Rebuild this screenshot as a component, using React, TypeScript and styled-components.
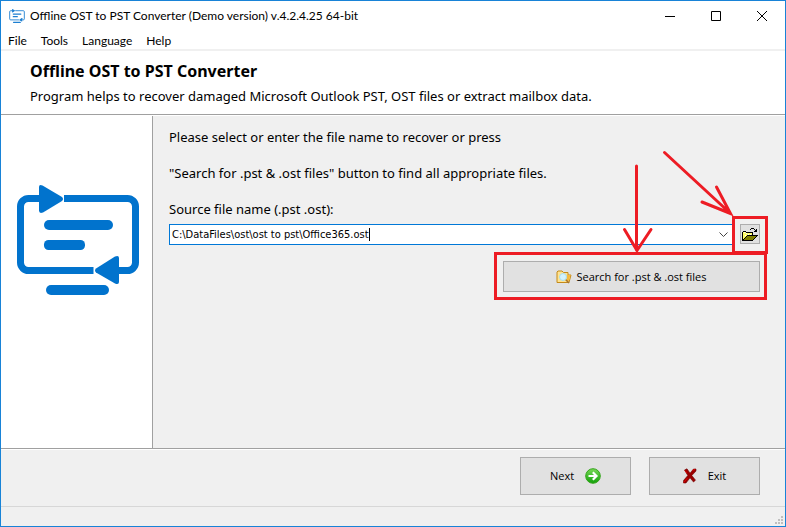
import React, { useState } from "react";
import styled, { createGlobalStyle } from "styled-components";

const chrome = `Lato, "Open Sans", sans-serif`;
const reading = `"Noto Sans", "Open Sans", sans-serif`;
const controls = `"Open Sans", "Noto Sans", sans-serif`;
const red = "#ed1c24";

const GlobalStyle = createGlobalStyle`
  * { box-sizing: border-box; }
  body { margin: 0; background: #f0f0f0; color: #000; font: 12px/16px ${chrome}; }
  button, input { font: inherit; color: inherit; }
  h1, p { margin: 0; }
`;

const Window = styled.div`
  display: flex;
  flex-direction: column;
  min-height: 100vh;
  border: 1px solid #1883d7;
  background: #f0f0f0;
`;

const TitleBar = styled.header`
  display: flex;
  align-items: center;
  gap: 5px;
  height: 30px;
  padding-left: 8px;
  background: #fff;
`;

const Title = styled.span`
  flex: 1;
  white-space: nowrap;
`;

const Controls = styled.div`
  display: flex;
`;

const WindowButton = styled.button`
  display: grid;
  place-items: center;
  width: 46px;
  height: 30px;
  padding: 0;
  border: 0;
  background: none;
`;

const MenuBar = styled.nav`
  display: flex;
  height: 20px;
  background: #fff;
  border-bottom: 2px solid #f0f0f0;
`;

const MenuItem = styled.button`
  padding: 0 7px;
  border: 0;
  background: none;
  line-height: 20px;
`;

const Banner = styled.section`
  height: 64px;
  padding: 9px 29px 0;
  margin-bottom: 1px;
  background: #fff;
  border-bottom: 1px solid #a0a0a0;
  box-shadow: 0 1px #fff;
  font-family: ${reading};
`;

const Heading = styled.h1`
  font-size: 16px;
  line-height: 22px;
  font-weight: 700;
`;

const Description = styled.p`
  font-size: 13px;
  line-height: 28px;
`;

const Body = styled.main`
  display: flex;
  flex: 1;
`;

const Sidebar = styled.aside`
  flex: none;
  width: 152px;
  padding: 69px 0 0 16px;
  background: #fff;
  border-right: 1px solid #a0a0a0;
`;

const Content = styled.section`
  position: relative;
  flex: 1;
  display: flex;
  flex-direction: column;
  padding: 11px 25px 0 16px;
`;

const Line = styled.p`
  margin-bottom: 16px;
  font: 13px/20px ${reading};
`;

const FieldLabel = styled.label`
  margin-bottom: 5px;
  font: 13px/20px ${reading};
`;

const FieldRow = styled.div`
  display: flex;
  gap: 6px;
`;

const Combo = styled.div`
  display: flex;
  flex: 1;
  align-items: center;
  height: 21px;
  padding-left: 2px;
  background: #fff;
  border: 1px solid #0078d7;
`;

const PathInput = styled.input`
  field-sizing: content;
  padding: 0;
  border: 0;
  outline: 0;
  background: none;
  font: 11px/16px "DejaVu Sans Condensed", "DejaVu Sans", sans-serif;
`;

const Caret = styled.span`
  width: 1px;
  height: 13px;
  background: #000;
`;

const DropButton = styled.button`
  display: grid;
  place-items: center;
  width: 19px;
  height: 19px;
  margin-left: auto;
  padding: 0;
  border: 0;
  background: none;
`;

const Marked = styled.div<{ $inset: string }>`
  position: relative;
  display: flex;

  &::after {
    content: "";
    position: absolute;
    inset: ${(p) => p.$inset};
    border: 3px solid ${red};
    pointer-events: none;
  }
`;

const PushButton = styled.button<{ $width: number; $height: number; $gap?: number }>`
  display: flex;
  align-items: center;
  justify-content: center;
  gap: ${(p) => p.$gap ?? 0}px;
  width: ${(p) => p.$width}px;
  height: ${(p) => p.$height}px;
  padding: 0;
  background: #e1e1e1;
  border: 1px solid #adadad;
  font: 11px/16px ${controls};
`;

const SearchRow = styled.div`
  display: flex;
  justify-content: flex-end;
  margin-top: 16px;
`;

const Arrows = styled.svg`
  position: absolute;
  top: 4px;
  right: 0;
  pointer-events: none;
`;

const Footer = styled.footer`
  display: flex;
  justify-content: flex-end;
  gap: 18px;
  height: 58px;
  padding: 8px 25px 0;
  border-top: 1px solid #a0a0a0;
  box-shadow: inset 0 1px #fff;
`;

const StatusBar = styled.div`
  display: flex;
  align-items: flex-end;
  justify-content: flex-end;
  height: 20px;
  padding: 0 2px 2px 0;
  border-top: 1px solid #d7d7d7;
`;

const Logo = ({ width, height, color }: { width: number; height: number; color: string }) => (
  <svg width={width} height={height} viewBox="0 0 122 110" fill={color} aria-hidden="true">
    <g fill="none" stroke={color} strokeWidth="7">
      <path d="M47 13.5h63.500a8 8 0 0 1 8 8V77.500a8 8 0 0 1-8 8H100" />
      <path d="M76.500 85.500H11.500a8 8 0 0 1-8-8V21.500a8 8 0 0 1 8-8H24" />
    </g>
    <path d="M22 2q0-3 3.500-1.500L45 12q2 2 0 4L26 27.500q-4 1.500-4-2z" />
    <path d="M102 73q0-3-4-1.500L79 83.500q-2 2 0 4L98 98.500q4 1.500 4-1.500z" />
    <rect x="27" y="35" width="69" height="10" rx="5" />
    <rect x="27" y="55" width="41" height="10" rx="4.500" />
    <rect x="29" y="100" width="63" height="10" rx="5" />
  </svg>
);

const OpenIcon = () => (
  <svg width="16" height="13" viewBox="0 0 16 13" shapeRendering="crispEdges" aria-hidden="true">
    <path d="M1 4h4v1h6v3H5L1 13z" fill="#ffff66" />
    <path d="M2 4h1v1H2zM4 5h1v1H4zM6 6h1v1H6zM8 6h1v1H8zM3 7h1v1H3zM5 7h1v1H5z" fill="#fff" />
    <path d="M5 8h10v1h-1v1h-1v1h-1v1h-1v1H1v-1h1v-1h1v-1h1V9h1z" fill="#808000" />
    <path d="M1 3h3v1H1zM0 4h1v9H0zM4 4h7v1H4zM10 5h1v2h-1zM5 7h11v1H5zM4 8h1v1H4zM3 9h1v1H3zM2 10h1v1H2zM1 11h1v1H1zM14 8h1v1h-1zM13 9h1v1h-1zM12 10h1v1h-1zM11 11h1v1h-1zM1 12h10v1H1zM9 0h3v1H9zM8 1h1v1H8zM12 1h1v1h-1zM13 2h2v1h-2zM12 3h3v1h-3zM14 1h1v2h-1z" fill="#000" />
  </svg>
);

const SearchFolderIcon = () => (
  <svg width="16" height="14" viewBox="0 0 16 14" aria-hidden="true">
    <path d="M1 12.500V2L2 1h4l1.500 1.500H12V5h3l-2 7.500z" fill="#ffe391" stroke="#c48a19" />
    <path d="M10.500 5h4L12.500 12l-2-1.500z" fill="#f5b93c" />
    <circle cx="7" cy="7" r="3.500" fill="#d3f2fc" stroke="#a9dcea" />
    <path d="M9.800 9.800l3.200 3.200" stroke="#a67533" strokeWidth="1.600" />
  </svg>
);

const NextIcon = () => (
  <svg width="16" height="16" viewBox="0 0 16 16" aria-hidden="true">
    <defs>
      <linearGradient id="green" x2="0" y2="1">
        <stop stopColor="#79d957" />
        <stop offset="1" stopColor="#11a009" />
      </linearGradient>
    </defs>
    <circle cx="8" cy="8" r="7.300" fill="url(#green)" stroke="#35a51c" />
    <path d="M3.500 8h7.500M7.800 4.300L11.500 8l-3.700 3.700" fill="none" stroke="#fff" strokeWidth="2.200" />
  </svg>
);

const ExitIcon = () => (
  <svg width="14" height="16" viewBox="0 0 14 16" aria-hidden="true">
    <path d="M1.500 2L4 .8l3 4.400L10.500 1H13v2L8.800 7.500l3.700 4.700L10.500 14 7 9.800 3 15H.5v-2.500L4.800 7.500z" fill="#900" stroke="#700000" strokeWidth=".6" />
    <path d="M.8 14.500L4.500 10M9.500 2.500l2.700-1.200M2 2.500l2 2.700" stroke="#e00000" />
  </svg>
);

export default function App() {
  const [path, setPath] = useState("C:\\DataFiles\\ost\\ost to pst\\Office365.ost");

  return (
    <>
      <GlobalStyle />
      <Window>
        <TitleBar>
          <Logo width={16} height={14} color="#1d7fd1" />
          <Title>Offline OST to PST Converter (Demo version) v.4.2.4.25 64-bit</Title>
          <Controls>
            <WindowButton aria-label="Minimize">
              <svg width="10" height="10"><path d="M0 5.500h10" stroke="#000" /></svg>
            </WindowButton>
            <WindowButton aria-label="Maximize">
              <svg width="10" height="10"><path d="M.5.5h9v9h-9z" fill="none" stroke="#000" /></svg>
            </WindowButton>
            <WindowButton aria-label="Close">
              <svg width="10" height="10"><path d="M0 0l10 10M10 0L0 10" stroke="#000" /></svg>
            </WindowButton>
          </Controls>
        </TitleBar>
        <MenuBar>
          {["File", "Tools", "Language", "Help"].map((item) => (
            <MenuItem key={item}>{item}</MenuItem>
          ))}
        </MenuBar>
        <Banner>
          <Heading>Offline OST to PST Converter</Heading>
          <Description>
            Program helps to recover damaged Microsoft Outlook PST, OST files or extract mailbox data.
          </Description>
        </Banner>
        <Body>
          <Sidebar>
            <Logo width={122} height={110} color="#0173cd" />
          </Sidebar>
          <Content>
            <Line>Please select or enter the file name to recover or press</Line>
            <Line>"Search for .pst &amp; .ost files" button to find all appropriate files.</Line>
            <FieldLabel htmlFor="source">Source file name (.pst .ost):</FieldLabel>
            <FieldRow>
              <Combo>
                <PathInput id="source" value={path} onChange={(e) => setPath(e.target.value)} />
                <Caret />
                <DropButton aria-label="Show recent files">
                  <svg width="9" height="6"><path d="M.5.5l4 4 4-4" fill="none" stroke="#444" /></svg>
                </DropButton>
              </Combo>
              <Marked $inset="-8px -8px -9px -8px">
                <PushButton $width={20} $height={20} aria-label="Open file">
                  <OpenIcon />
                </PushButton>
              </Marked>
            </FieldRow>
            <SearchRow>
              <Marked $inset="-9px -7px -8px -9px">
                <PushButton $width={257} $height={31} $gap={4}>
                  <SearchFolderIcon />
                  Search for .pst &amp; .ost files
                </PushButton>
              </Marked>
            </SearchRow>
            <Arrows width="185" height="140" viewBox="600 120 185 140" aria-hidden="true">
              <g fill="none" stroke={red} strokeWidth="3" strokeLinecap="round">
                <path d="M636.500 166v84M624.500 229.500l12.500 21 14-21" />
                <path d="M664.500 152.500l66 61M716.500 187l14 26.500-28.500-11.500" />
              </g>
            </Arrows>
          </Content>
        </Body>
        <Footer>
          <PushButton $width={111} $height={38} $gap={11}>
            Next
            <NextIcon />
          </PushButton>
          <PushButton $width={111} $height={38} $gap={11}>
            <ExitIcon />
            Exit
          </PushButton>
        </Footer>
        <StatusBar>
          <svg width="8" height="8" fill="#bfbfbf" aria-hidden="true">
            <path d="M6 0h2v2H6zM3 3h2v2H3zM6 3h2v2H6zM0 6h2v2H0zM3 6h2v2H3zM6 6h2v2H6z" />
          </svg>
        </StatusBar>
      </Window>
    </>
  );
}
